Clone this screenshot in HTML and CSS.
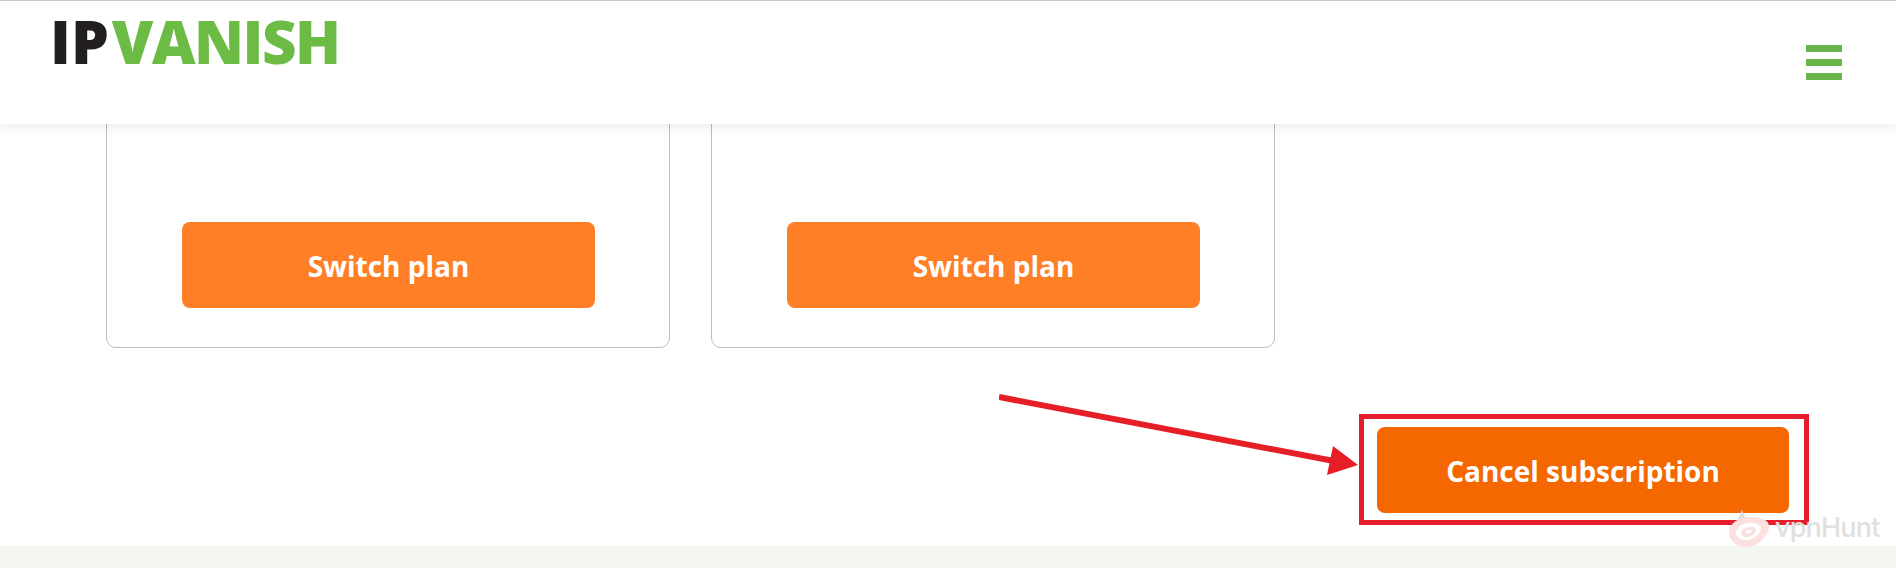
FILE: index.html
```html
<!DOCTYPE html>
<html lang="en">
<head>
    <meta charset="UTF-8">
    <meta name="viewport" content="width=device-width, initial-scale=1.0">
    <title>IPVanish - Subscription</title>
    <link rel="stylesheet" href="styles.css">
</head>
<body>
    <header class="site-header">
        <a class="logo" href="#"><span class="logo-ip">IP</span><span class="logo-vanish">VANISH</span></a>
        <button class="menu-toggle" aria-label="Menu">
            <span></span>
            <span></span>
            <span></span>
        </button>
    </header>

    <!-- watermark -->
    <div class="watermark">
        <svg width="42" height="38" viewBox="0 0 42 38" fill="none">
            <polygon points="14,0 19,12 9,12" fill="#dcdcdc"/>
            <path d="M1 22C1 14 10 7 22 7c10 0 19 3 19 9 0 10-12 21-22 21C9 37 1 31 1 22z" fill="#fbe0e0"/>
            <path d="M8 23c0-6 7-10 14-10 6 0 11 2 11 5 0 6-8 12-14 12-6 0-11-3-11-7z" fill="#fff"/>
            <path d="M13 23c0-4 5-6 10-6 4 0 6 2 5 4-1 4-6 6-10 6-3 0-5-2-5-4z" fill="#fbe0e0"/>
            <path d="M18 22c0-2 3-3 5-2 1 1 0 3-2 3-2 1-3 0-3-1z" fill="#fff"/>
        </svg>
        <span class="watermark-text">vpnHunt</span>
    </div>

    <main class="content">
        <div class="plans">
            <div class="plan-card">
                <a class="btn btn-switch" href="#">Switch plan</a>
            </div>
            <div class="plan-card">
                <a class="btn btn-switch" href="#">Switch plan</a>
            </div>
        </div>

        <div class="actions">
            <a class="btn btn-cancel" href="#">
                Cancel subscription
                <span class="highlight-box"></span>
            </a>
        </div>
    </main>

    <footer class="site-footer"></footer>

    <!-- annotation arrow -->
    <svg class="arrow" width="380" height="90" viewBox="0 0 380 90">
        <line x1="0" y1="5" x2="340" y2="70" stroke="#e61e25" stroke-width="6"/>
        <polygon points="359,73 334,54 328,83" fill="#e61e25"/>
    </svg>
</body>
</html>
```

FILE: styles.css
```css
* {
    box-sizing: border-box;
}
html, body {
    margin: 0;
    padding: 0;
}
body {
    background-color: #fff;
    font-family: "Open Sans", Arial, sans-serif;
    height: 568px;
    overflow: hidden;
    position: relative;
}
.site-header {
    position: fixed;
    top: 0;
    left: 0;
    right: 0;
    height: 124px;
    background-color: #fff;
    border-top: 1px solid #c8c8c8;
    box-shadow: 0 3px 12px rgba(0, 0, 0, 0.08);
    display: flex;
    justify-content: space-between;
    align-items: flex-start;
    padding: 0 54px 0 50px;
    z-index: 10;
}
.logo {
    display: block;
    font-size: 60px;
    font-weight: 800;
    line-height: 62px;
    margin-top: 9px;
    text-decoration: none;
    white-space: nowrap;
}
.logo-ip {
    color: #231f20;
    margin-right: 3px;
}
.logo-vanish {
    color: #6cbb45;
    letter-spacing: -1.5px;
}
.menu-toggle {
    background: none;
    border: 0;
    padding: 0;
    margin-top: 44px;
    width: 36px;
    display: flex;
    flex-direction: column;
    gap: 7px;
}
.menu-toggle span {
    display: block;
    height: 7px;
    background-color: #6ab54b;
}
.content {
    position: relative;
    padding: 100px 107px 0 106px;
}
.plans {
    display: flex;
    gap: 41px;
}
.plan-card {
    width: 564px;
    height: 248px;
    border: 1px solid #bcbcbc;
    border-radius: 10px;
    padding: 121px 74px 0 75px;
}
.btn {
    display: block;
    color: #fff;
    font-weight: 700;
    text-align: center;
    text-decoration: none;
    border-radius: 8px;
    height: 86px;
    line-height: 88px;
    font-size: 28px;
}
.btn-switch {
    background-color: #ff7f27;
}
.btn-cancel {
    background-color: #f56700;
    position: relative;
    width: 412px;
}
.actions {
    display: flex;
    justify-content: flex-end;
    margin-top: 79px;
}
.highlight-box {
    position: absolute;
    top: -13px;
    bottom: -12px;
    left: -18px;
    right: -20px;
    border: 5px solid #e61e2b;
}
.arrow {
    position: absolute;
    left: 999px;
    top: 392px;
}
.site-footer {
    position: absolute;
    left: 0;
    right: 0;
    bottom: 0;
    height: 22px;
    background-color: #f3f5f0;
}
.watermark {
    position: absolute;
    left: 1728px;
    top: 510px;
    display: flex;
    align-items: flex-start;
    gap: 5px;
    z-index: 2;
}
.watermark-text {
    color: #e0e0e0;
    font-family: Inter, sans-serif;
    font-size: 27px;
    font-weight: 500;
    line-height: 28px;
    letter-spacing: -0.8px;
    margin-top: 4px;
}
```
